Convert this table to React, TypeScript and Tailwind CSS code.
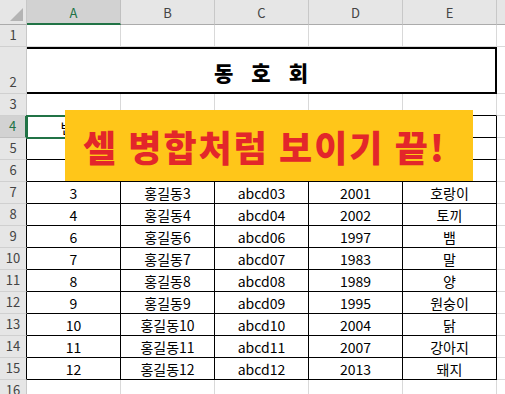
import React from "react";

const COLS = ["A", "B", "C", "D", "E"];

const rows: (string[] | null)[] = [
  null, // 1
  null, // 2 merged title
  null, // 3
  ["번호", "", "", "", ""],
  ["", "", "", "", ""],
  ["", "", "", "", ""],
  ["3", "홍길동3", "abcd03", "2001", "호랑이"],
  ["4", "홍길동4", "abcd04", "2002", "토끼"],
  ["6", "홍길동6", "abcd06", "1997", "뱀"],
  ["7", "홍길동7", "abcd07", "1983", "말"],
  ["8", "홍길동8", "abcd08", "1989", "양"],
  ["9", "홍길동9", "abcd09", "1995", "원숭이"],
  ["10", "홍길동10", "abcd10", "2004", "닭"],
  ["11", "홍길동11", "abcd11", "2007", "강아지"],
  ["12", "홍길동12", "abcd12", "2013", "돼지"],
  null, // 16
  null, // 17
];

export default function App() {
  const cells: React.ReactNode[] = [];

  cells.push(
    <div
      key="corner"
      className="relative bg-[#e6e6e6] border-r border-b border-r-[#c8c8c8] border-b-[#ababab]"
    >
      <div className="absolute right-[3px] bottom-[3px] w-0 h-0 border-l-[13px] border-l-transparent border-b-[13px] border-b-[#b4b4b4]" />
    </div>
  );
  COLS.forEach((c) => {
    const sel = c === "A";
    cells.push(
      <div
        key={"h" + c}
        className={
          sel
            ? "flex items-center justify-center bg-[#d2d2d2] border-r border-r-[#c0c0c0] border-b-2 border-b-[#217346] text-[13px] text-[#217346]"
            : "flex items-center justify-center bg-[#e6e6e6] border-r border-r-[#c8c8c8] border-b border-b-[#ababab] text-[13px] text-[#444444]"
        }
      >
        <span className={sel ? "mt-[2px]" : "mt-[1px]"}>{c}</span>
      </div>
    );
  });
  cells.push(
    <div key="hF" className="bg-[#e6e6e6] border-b border-b-[#ababab]" />
  );

  rows.forEach((r, i) => {
    const n = i + 1;
    const inTable = n >= 4 && n <= 15;
    const selRow = n === 4;
    cells.push(
      <div
        key={"rh" + n}
        className={
          selRow
            ? "flex items-end justify-center pb-[2px] bg-[#d2d2d2] border-b border-b-[#c0c0c0] border-r-2 border-r-[#217346] text-[13px] text-[#217346]"
            : inTable
            ? "flex items-end justify-center pb-[2px] bg-[#e6e6e6] border-b border-b-[#d0d0d0] border-r border-r-black text-[13px] text-[#444444]"
            : "flex items-end justify-center pb-[2px] bg-[#e6e6e6] border-b border-b-[#d0d0d0] border-r border-r-[#c8c8c8] text-[13px] text-[#444444]"
        }
      >
        {n}
      </div>
    );

    if (n === 2) {
      cells.push(
        <div
          key="merged"
          className="col-span-5 flex items-center justify-center gap-[18px] pt-[5px] border-t-2 border-b-2 border-r-2 border-black text-[21px] font-black text-black"
        >
          <span>동</span>
          <span>호</span>
          <span>회</span>
        </div>
      );
    } else {
      COLS.forEach((c, ci) => {
        const txt = r ? r[ci] : "";
        let cls =
          "flex items-center justify-center pt-[2px] text-[14px] text-black whitespace-nowrap overflow-hidden border-r border-b ";
        if (inTable) cls += "border-r-black border-b-black";
        else if (n === 3) cls += "border-r-[#d9d9d9] border-b-black";
        else cls += "border-r-[#d9d9d9] border-b-[#d9d9d9]";
        cells.push(
          <div key={"c" + n + c} className={cls}>
            {txt}
          </div>
        );
      });
    }
    cells.push(
      <div key={"f" + n} className="border-b border-b-[#d9d9d9]" />
    );
  });

  return (
    <div
      className="relative w-[505px] h-[394px] overflow-hidden bg-white"
      style={{ fontFamily: "'Noto Sans CJK KR', 'Noto Sans', sans-serif" }}
    >
      <div className="grid grid-cols-[27px_94px_94px_94px_94px_94px_1fr] grid-rows-[25px_22px_47px_repeat(14,22px)]">
        {cells}
      </div>

      <div className="absolute left-[26px] top-[115px] w-[96px] h-[24px] border-2 border-[#217346]" />

      <div className="absolute left-[65px] top-[110px] w-[408px] h-[71px] bg-[#ffc619] flex items-center pl-[18px]">
        <span className="text-[36px] font-black text-[#e3262a] tracking-[2px] leading-none whitespace-nowrap">
          셀 병합처럼 보이기 끝!
        </span>
      </div>
    </div>
  );
}
